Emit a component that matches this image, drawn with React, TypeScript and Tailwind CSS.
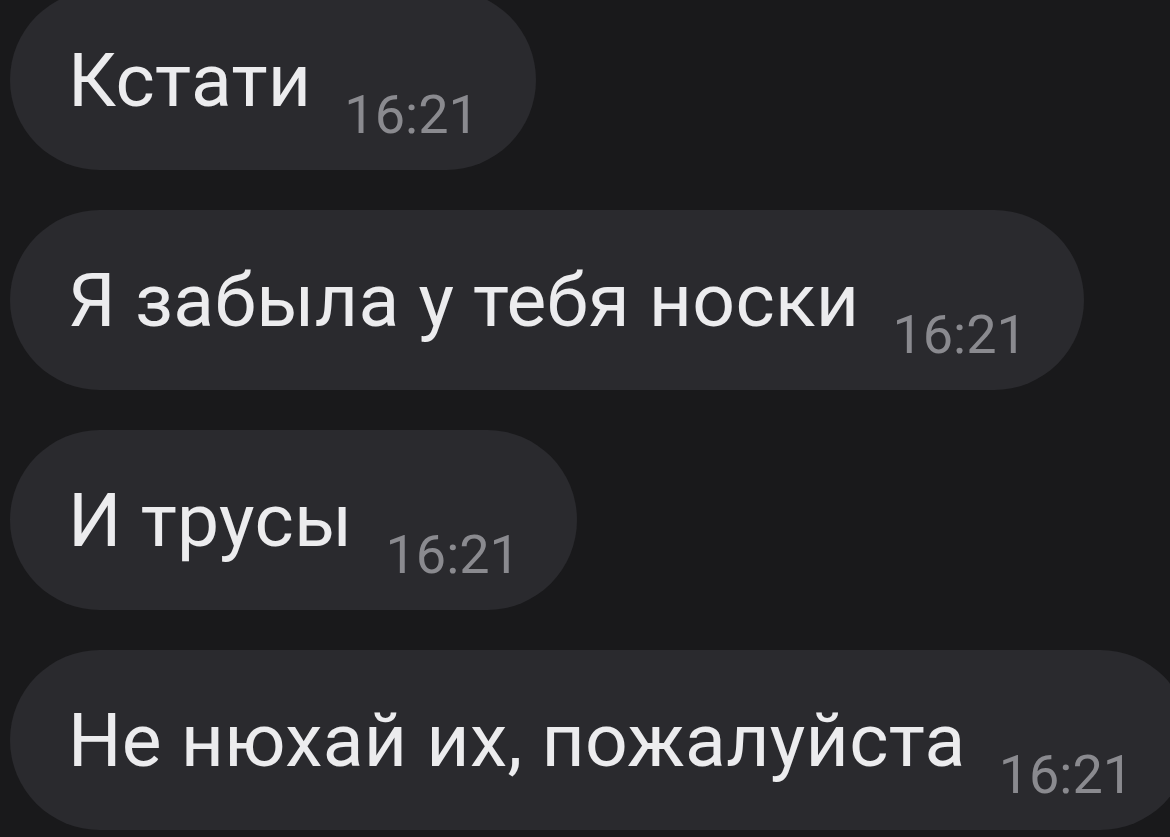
import React from "react";

const messages = [
  "Кстати",
  "Я забыла у тебя носки",
  "И трусы",
  "Не нюхай их, пожалуйста",
];

function Bubble({ text }: { text: string }) {
  return (
    <div className="flex h-[180px] w-max shrink-0 items-start rounded-full bg-[#2a2a2e] pl-[58px] pr-[57px] pt-[53px]">
      <span className="whitespace-nowrap text-[75px] leading-none tracking-[0.3px] text-[#ececee]">
        {text}
      </span>
      <span className="ml-[33px] mt-[45px] whitespace-nowrap text-[54px] leading-none text-[#8a8a8f]">
        16:21
      </span>
    </div>
  );
}

export default function App() {
  return (
    <div
      className="h-[837px] w-[1170px] overflow-hidden bg-[#19191b]"
      style={{ fontFamily: "Roboto, 'Noto Sans', sans-serif" }}
    >
      <div className="-mt-[10px] flex flex-col gap-[40px] pl-[10px]">
        {messages.map((m) => (
          <Bubble key={m} text={m} />
        ))}
      </div>
    </div>
  );
}
